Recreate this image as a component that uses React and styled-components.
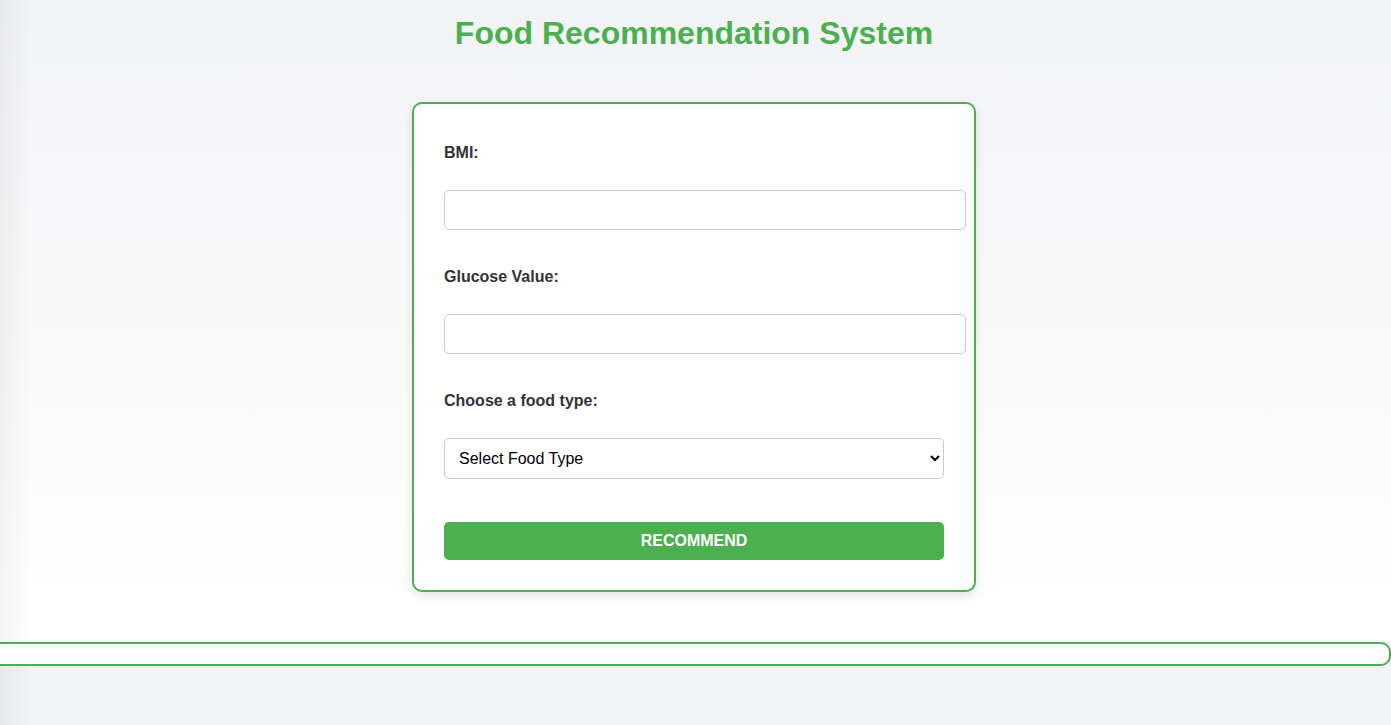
import styled, { createGlobalStyle } from "styled-components";

const edgeShade = "linear-gradient(to right, rgba(0, 0, 0, 0.045), rgba(0, 0, 0, 0) 32px)";

const GlobalStyle = createGlobalStyle`
  html, body {
    margin: 0;
    padding: 0;
  }

  body {
    font-family: "Liberation Sans", Arial, sans-serif;
    background: ${edgeShade}, #f2f3f5;
    min-height: 725px;
    overflow-x: hidden;
  }
`;

const Page = styled.main`
  min-height: 725px;
`;

const Hero = styled.div`
  background: ${edgeShade}, linear-gradient(to bottom, #f2f3f5, #ffffff);
  padding: 15px 3px 50px 0;
`;

const Title = styled.h1`
  margin: 0 0 50px;
  text-align: center;
  color: #4caf50;
  font-size: 32px;
  line-height: 37px;
  font-weight: bold;
`;

const Card = styled.form`
  width: 500px;
  margin: 0 auto;
  padding: 30px;
  background: #fff;
  border: 2px solid #4caf50;
  border-radius: 10px;
  box-shadow: 0 4px 10px rgba(0, 0, 0, 0.1);
  display: flex;
  flex-direction: column;
`;

const Label = styled.label`
  display: block;
  margin: 10px 0 28px;
  font-size: 16px;
  line-height: 18px;
  font-weight: bold;
  color: #333;
`;

const Input = styled.input`
  width: 100%;
  height: 18px;
  padding: 10px;
  margin: 0 0 28px;
  font-family: "Liberation Sans", Arial, sans-serif;
  font-size: 16px;
  border: 1px solid #ccc;
  border-radius: 5px;
  background: #fff;
  outline: none;
`;

const Select = styled.select`
  box-sizing: border-box;
  width: 100%;
  height: 41px;
  padding: 0 8px 0 10px;
  margin: 0 0 43px;
  font-family: "Liberation Sans", Arial, sans-serif;
  font-size: 16px;
  color: #000;
  border: 1px solid #ccc;
  border-radius: 5px;
  background: #fff;
`;

const Button = styled.button`
  width: 100%;
  height: 38px;
  border: none;
  border-radius: 5px;
  background: #4caf50;
  color: #fff;
  font-family: "Liberation Sans", Arial, sans-serif;
  font-size: 16px;
  font-weight: bold;
  text-transform: uppercase;
  cursor: pointer;
`;

const Results = styled.div`
  margin: 0 0 0 -20px;
  padding: 10px;
  background: #fff;
  border: 2px solid #4caf50;
  border-radius: 10px;
`;

export default function App() {
  return (
    <>
      <GlobalStyle />
      <Page>
        <Hero>
          <Title>Food Recommendation System</Title>
          <Card onSubmit={(e) => e.preventDefault()}>
            <Label htmlFor="bmi">BMI:</Label>
            <Input id="bmi" type="text" />

            <Label htmlFor="glucose">Glucose Value:</Label>
            <Input id="glucose" type="text" />

            <Label htmlFor="foodType">Choose a food type:</Label>
            <Select id="foodType" defaultValue="">
              <option value="">Select Food Type</option>
              <option value="veg">Vegetarian</option>
              <option value="nonveg">Non-Vegetarian</option>
            </Select>

            <Button type="submit">Recommend</Button>
          </Card>
        </Hero>
        <Results />
      </Page>
    </>
  );
}
